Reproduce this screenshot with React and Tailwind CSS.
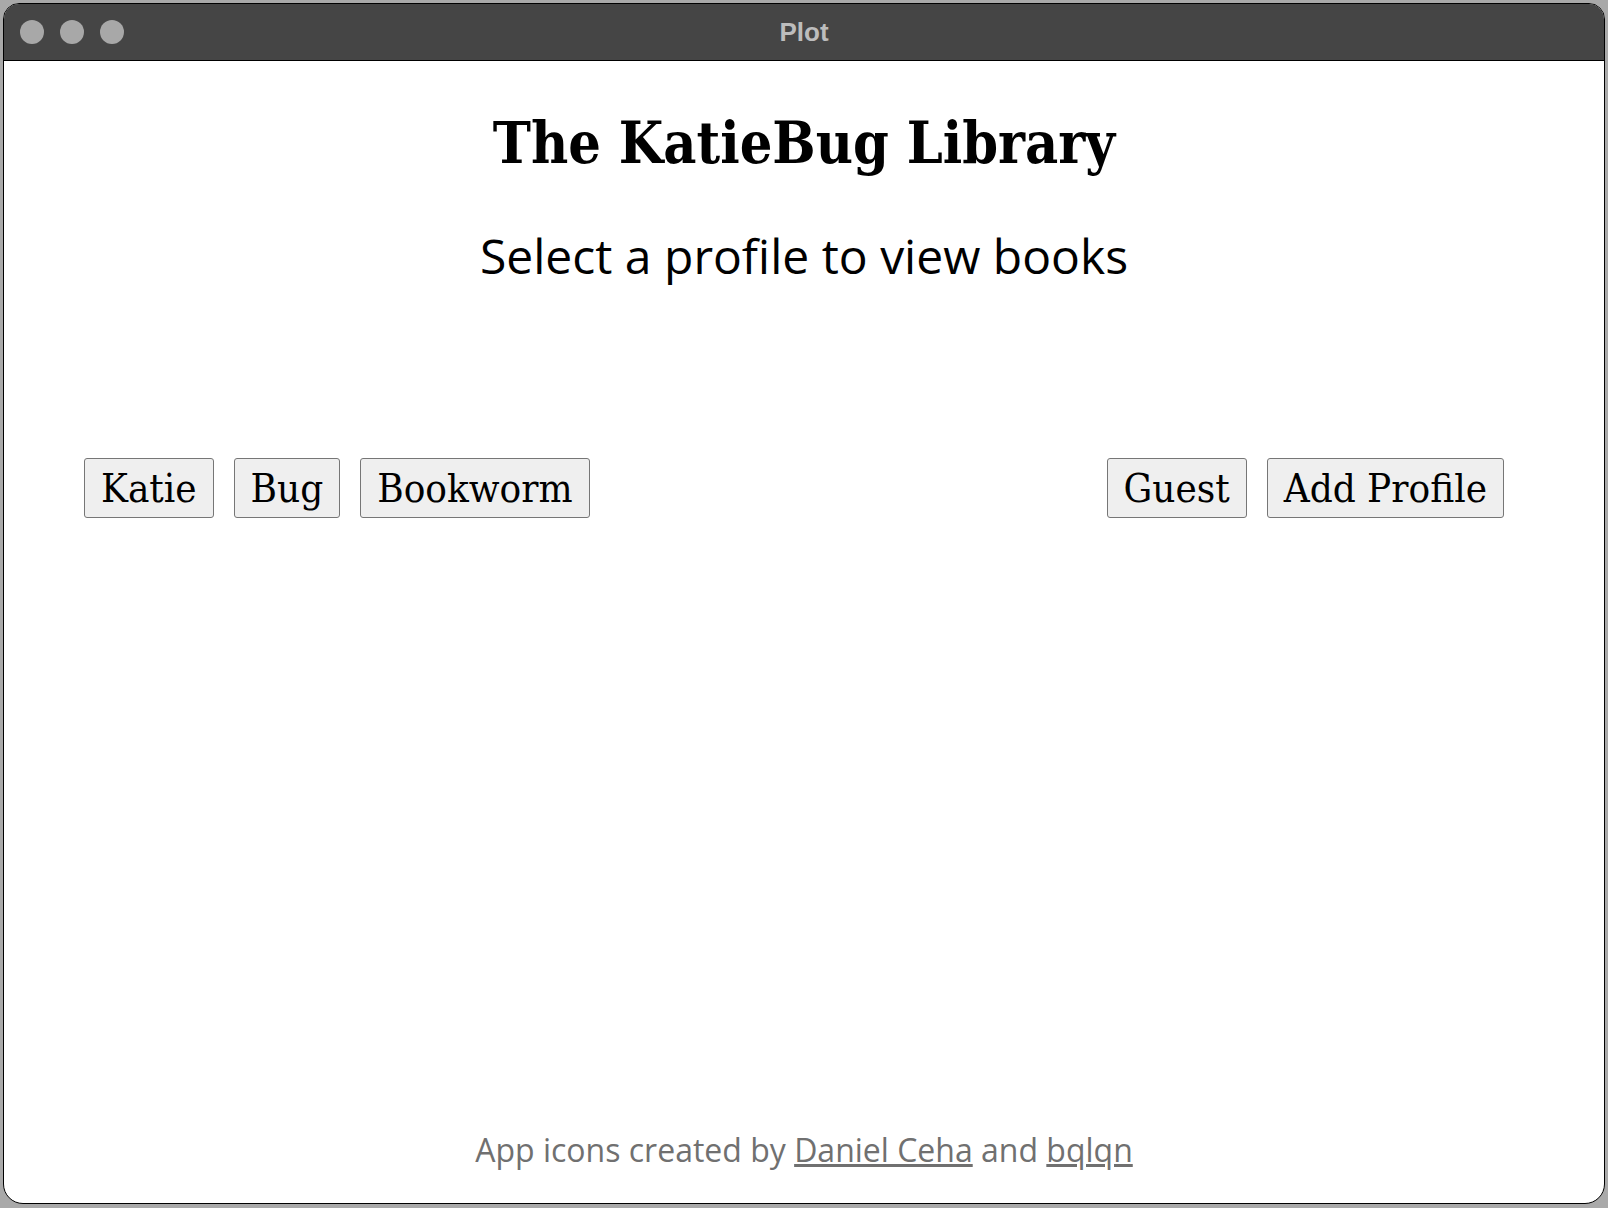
import React from "react";

const slab = { fontFamily: '"DejaVu Serif Condensed", "DejaVu Serif", serif' };
const sans = { fontFamily: '"Open Sans", "Noto Sans", sans-serif' };

const ProfileButton = ({ label }) => (
  <button
    className="mr-[20px] h-[60px] px-[16px] bg-[#efefef] border border-[#767676] rounded-[3px] text-[40px] leading-none text-black"
    style={slab}
  >
    {label}
  </button>
);

const App = () => {
  return (
    <div className="w-[1608px] h-[1208px] bg-[#a9a9a9] p-[3px] pb-[4px]">
      <div className="h-full flex flex-col bg-white border border-black rounded-t-[16px] rounded-b-[20px] overflow-hidden">
        {/* title bar */}
        <div className="relative h-[57px] shrink-0 bg-[#454545] border-b border-black flex items-center pl-[16px] gap-[16px]">
          <div className="w-[24px] h-[24px] rounded-full bg-[#a8a8a8]" />
          <div className="w-[24px] h-[24px] rounded-full bg-[#a8a8a8]" />
          <div className="w-[24px] h-[24px] rounded-full bg-[#a8a8a8]" />
          <span
            className="absolute left-0 right-0 text-center text-[26px] font-bold text-[#bdbdbd]"
            style={{ fontFamily: '"Liberation Sans", Arial, sans-serif' }}
          >
            Plot
          </span>
        </div>

        <div className="flex-1 flex flex-col">
          <h1 className="mt-[53px] text-center text-[57px] font-bold leading-none text-black" style={slab}>
            The KatieBug Library
          </h1>
          <p className="mt-[61px] text-center text-[48px] leading-none text-black" style={sans}>
            Select a profile to view books
          </p>

          <div className="mt-[178px] px-[80px] flex justify-between">
            <div className="flex">
              <ProfileButton label="Katie" />
              <ProfileButton label="Bug" />
              <ProfileButton label="Bookworm" />
            </div>
            <div className="flex">
              <ProfileButton label="Guest" />
              <ProfileButton label="Add Profile" />
            </div>
          </div>

          <p className="mt-auto pb-[37px] text-center text-[32px] leading-none text-[#707070]" style={sans}>
            App icons created by <a className="underline" href="#">Daniel Ceha</a> and{" "}
            <a className="underline" href="#">bqlqn</a>
          </p>
        </div>
      </div>
    </div>
  );
};

export default App;
